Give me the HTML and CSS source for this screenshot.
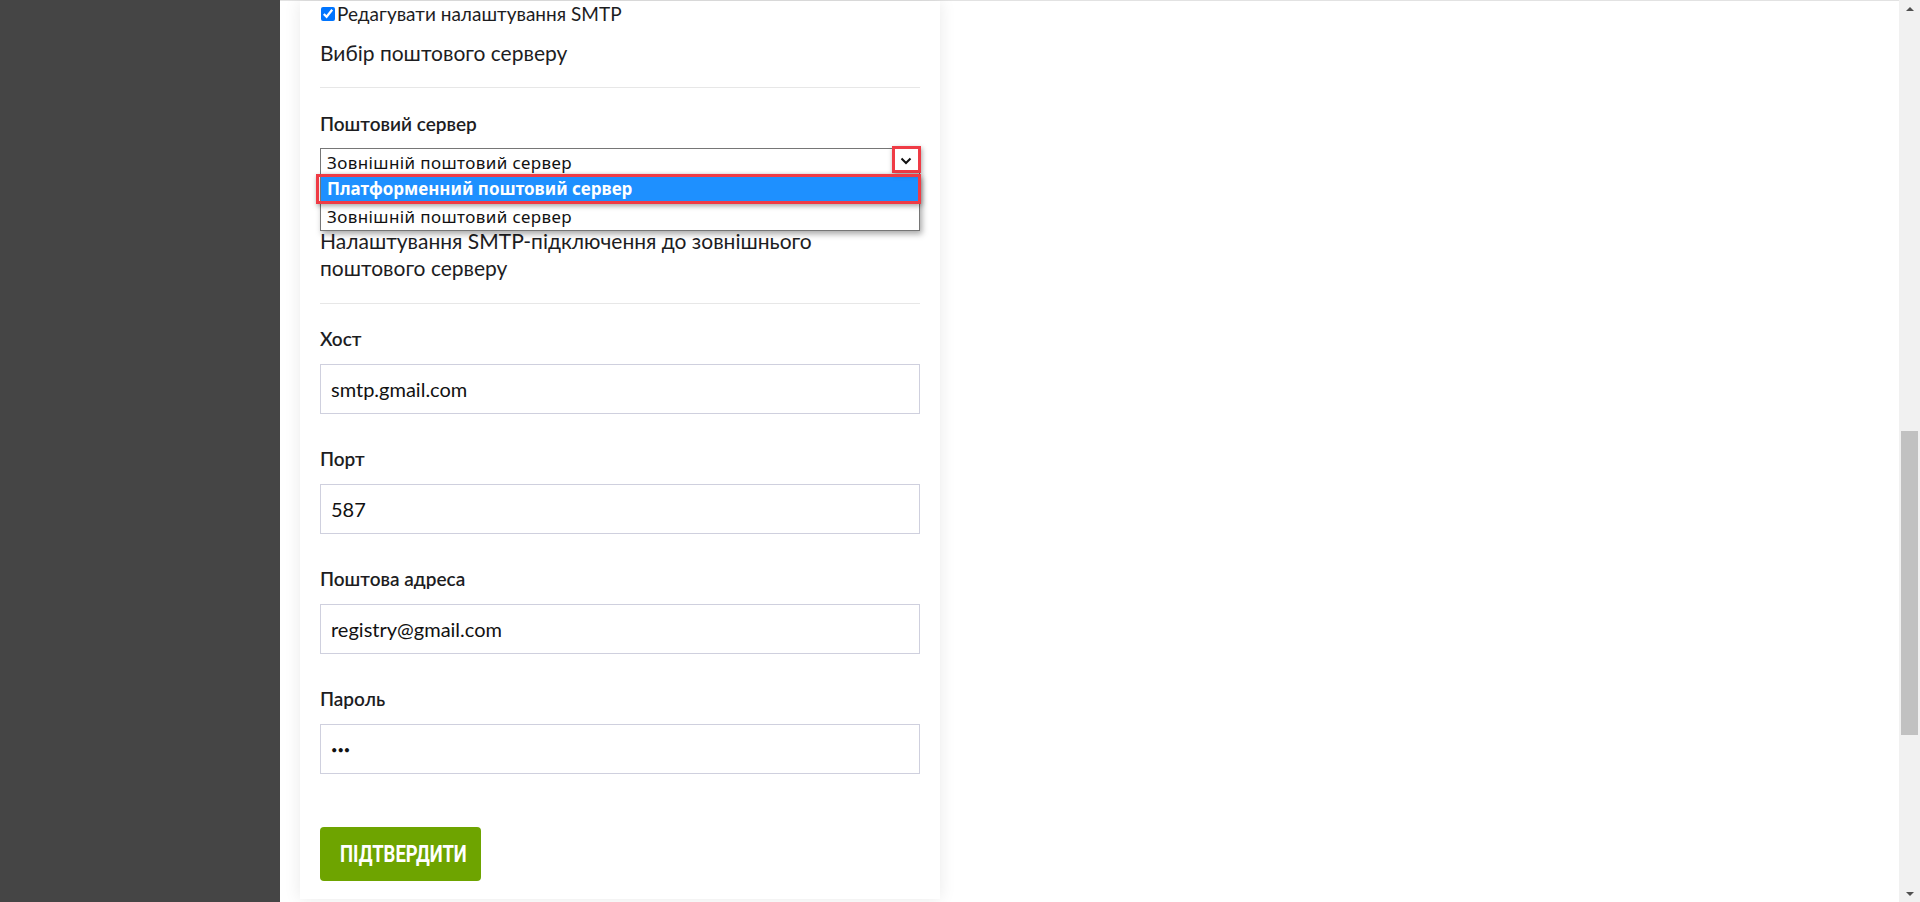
FILE: index.html
```html
<!DOCTYPE html>
<html lang="uk">
<head>
<meta charset="utf-8">
<title>SMTP</title>
<link rel="stylesheet" href="styles.css">
</head>
<body>
<div class="app">
  <aside class="sidebar"></aside>
  <main class="main">
    <section class="card">
      <label class="check-row"><input type="checkbox" class="check" checked>Редагувати налаштування SMTP</label>
      <h3 class="section-title">Вибір поштового серверу</h3>
      <hr class="divider">
      <div class="field field-server">
        <div class="field-label">Поштовий сервер</div>
        <div class="select-wrap">
          <div class="select">
            <span class="select-value">Зовнішній поштовий сервер</span>
            <svg class="chevron" width="12" height="8" viewBox="0 0 12 8"><path d="M1.5 1.5 L6 6 L10.5 1.5" fill="none" stroke="#111" stroke-width="2"/></svg>
          </div>
          <ul class="dropdown">
            <li class="option option-active">Платформенний поштовий сервер</li>
            <li class="option">Зовнішній поштовий сервер</li>
          </ul>
          <div class="mark mark-arrow"></div>
          <div class="mark mark-option"></div>
        </div>
      </div>
      <h3 class="section-title section-title-2">Налаштування SMTP-підключення до зовнішнього поштового серверу</h3>
      <hr class="divider divider-2">
      <div class="field field-first">
        <div class="field-label">Хост</div>
        <input class="text-input" type="text" value="smtp.gmail.com">
      </div>
      <div class="field">
        <div class="field-label">Порт</div>
        <input class="text-input" type="text" value="587">
      </div>
      <div class="field">
        <div class="field-label">Поштова адреса</div>
        <input class="text-input" type="text" value="registry@gmail.com">
      </div>
      <div class="field">
        <div class="field-label">Пароль</div>
        <input class="text-input text-input-password" type="password" value="abc">
      </div>
      <button class="submit" type="button"><span class="submit-text">Підтвердити</span></button>
    </section>
  </main>
  <div class="scrollbar">
    <div class="sb-btn"><span class="tri tri-up"></span></div>
    <div class="sb-track"><div class="sb-thumb"></div></div>
    <div class="sb-btn"><span class="tri tri-down"></span></div>
  </div>
</div>
</body>
</html>
```
FILE: styles.css
```css
* { box-sizing: border-box; }
html, body { margin: 0; padding: 0; height: 100%; }
body {
  font-family: "Lato", "Noto Sans", sans-serif;
  color: #1d1d1f;
  overflow: hidden;
  background: #fff;
}
.app { display: flex; height: 902px; }
.sidebar { width: 280px; flex: none; background: #454545; }
.main {
  flex: 1;
  min-width: 0;
  background: #fff;
  border-top: 1px solid #e2e2e2;
}
.card {
  width: 640px;
  margin-left: 20px;
  background: #fff;
  box-shadow: 0 0 16px rgba(0, 0, 0, 0.09);
  padding: 0 20px 18px;
}
.check-row {
  display: flex;
  align-items: center;
  font-size: 19px;
  line-height: 26px;
  height: 26px;
}
.check { margin: 0 2px 0 1px; width: 14px; height: 14px; }
.section-title {
  font-size: 21px;
  line-height: 30px;
  font-weight: 400;
  margin: 11px 0 0;
}
.section-title-2 { margin-top: 51px; line-height: 27px; }
.divider {
  border: 0;
  border-top: 1px solid #e7e7e7;
  height: 0;
  margin: 19px 0 0;
}
.divider-2 { margin-top: 22px; }
.field { margin-top: 32px; }
.field-server { margin-top: 23px; }
.field-first { margin-top: 22px; }
.field-label {
  font-size: 19px;
  line-height: 26px;
  font-weight: 600;
}
.select-wrap { position: relative; margin-top: 11px; }
.select {
  height: 28px;
  border: 1px solid #767676;
  background: #fff;
  display: flex;
  align-items: center;
  justify-content: space-between;
  padding: 0 7px 0 6px;
  font-family: "Noto Sans", sans-serif;
  font-size: 17px;
  letter-spacing: 0.4px;
  color: #111;
}
.chevron { display: block; margin-top: -2px; }
.dropdown {
  position: absolute;
  left: 0;
  top: 26px;
  width: 600px;
  height: 57px;
  margin: 0;
  padding: 0;
  list-style: none;
  background: #fff;
  border: 1px solid #767676;
  box-shadow: 2px 3px 6px rgba(0, 0, 0, 0.35);
  font-family: "Noto Sans", sans-serif;
  font-size: 17px;
  color: #111;
}
.option { height: 27px; line-height: 27px; padding-left: 6px; letter-spacing: 0.4px; }
.option-active {
  height: 28px;
  line-height: 28px;
  background: #1e90ff;
  color: #fff;
  font-weight: 700;
  letter-spacing: 0;
}
.mark {
  position: absolute;
  border: 3px solid #ef3b45;
  box-shadow: 1px 2px 5px rgba(0, 0, 0, 0.35);
}
.mark-arrow { left: 572px; top: -2px; width: 29px; height: 27px; }
.mark-option { left: -4px; top: 26px; width: 605px; height: 30px; }
.text-input {
  display: block;
  width: 100%;
  height: 50px;
  margin-top: 12px;
  border: 1px solid #cfd0de;
  border-radius: 0;
  padding: 0 10px;
  font-family: "Lato", "Noto Sans", sans-serif;
  font-size: 20px;
  color: #111;
  background: #fff;
  outline: none;
}
.text-input-password { font-size: 11px; letter-spacing: 0; }
.submit {
  display: block;
  margin-top: 53px;
  width: 161px;
  height: 54px;
  border: 0;
  border-radius: 4px;
  background: #6ea400;
  color: #fff;
  text-transform: uppercase;
  text-align: left;
  padding: 0 0 0 20px;
  font-family: "Roboto", "Noto Sans", sans-serif;
  font-weight: 700;
  font-size: 24px;
  white-space: nowrap;
  overflow: hidden;
}
.submit-text {
  display: inline-block;
  transform: scaleX(0.77);
  transform-origin: left center;
}
.scrollbar {
  width: 21px;
  flex: none;
  background: #f1f1f1;
  display: flex;
  flex-direction: column;
}
.sb-btn {
  height: 17px;
  display: flex;
  align-items: center;
  justify-content: center;
}
.sb-track { flex: 1; padding-top: 414px; }
.sb-thumb { height: 304px; margin: 0 2px; background: #c1c1c1; }
.tri { width: 0; height: 0; border-left: 4px solid transparent; border-right: 4px solid transparent; }
.tri-up { border-bottom: 4px solid #505050; }
.tri-down { border-top: 4px solid #505050; }
```
